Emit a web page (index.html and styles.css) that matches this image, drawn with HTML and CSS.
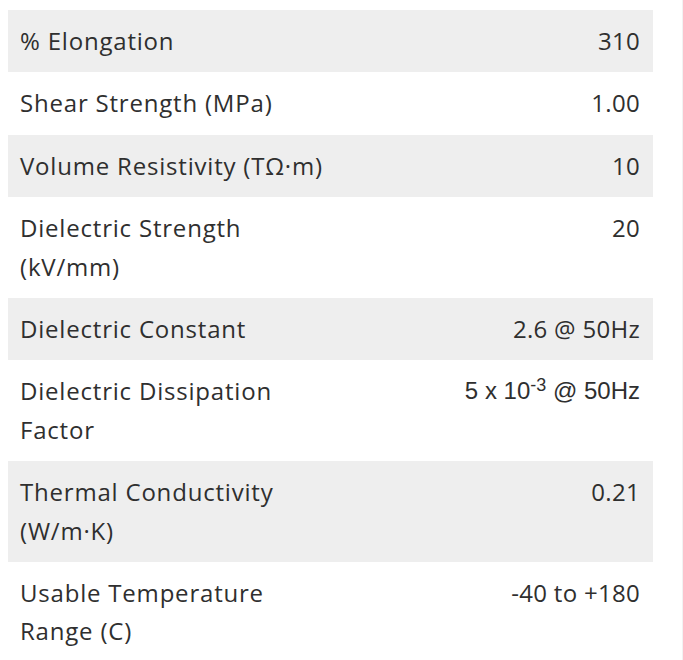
FILE: index.html
```
<!DOCTYPE html>
<html lang="en">
<head>
<meta charset="utf-8">
<title>Properties</title>
<link rel="stylesheet" href="styles.css">
</head>
<body>
<div class="page">
  <table class="props">
    <colgroup>
      <col class="col-label">
      <col class="col-value">
    </colgroup>
    <tbody>
      <tr class="odd"><td class="label">% Elongation</td><td class="value">310</td></tr>
      <tr><td class="label">Shear Strength (MPa)</td><td class="value">1.00</td></tr>
      <tr class="odd"><td class="label">Volume Resistivity (TΩ·m)</td><td class="value">10</td></tr>
      <tr><td class="label">Dielectric Strength (kV/mm)</td><td class="value">20</td></tr>
      <tr class="odd"><td class="label">Dielectric Constant</td><td class="value">2.6 @ 50Hz</td></tr>
      <tr><td class="label">Dielectric Dissipation Factor</td><td class="value alt">5 x 10<sup>-3</sup> @ 50Hz</td></tr>
      <tr class="odd"><td class="label">Thermal Conductivity (W/m·K)</td><td class="value">0.21</td></tr>
      <tr><td class="label">Usable Temperature Range (C)</td><td class="value">-40 to +180</td></tr>
    </tbody>
  </table>
</div>
</body>
</html>
```
FILE: styles.css
```
html, body {
  margin: 0;
  padding: 0;
  background: #fff;
}
.page {
  box-sizing: border-box;
  min-height: 100vh;
  padding: 10px 0 0 8px;
  border-right: 1px solid #f2f2f2;
}
.props {
  width: 645px;
  border-collapse: collapse;
  table-layout: fixed;
  font-family: "Open Sans", sans-serif;
  font-size: 24px;
  line-height: 1.6;
  color: #2f2f2f;
}
.col-label { width: 336px; }
.props td {
  padding: 12px 13px 12px 12px;
  vertical-align: top;
}
.props tr.odd td { background: #eee; }
.label { letter-spacing: 0.8px; }
.value {
  text-align: right;
  letter-spacing: 0.3px;
}
.value.alt {
  font-family: "Liberation Sans", Arial, sans-serif;
  letter-spacing: 0;
}
.value.alt sup {
  font-size: 0.75em;
  line-height: 0;
  vertical-align: 0.45em;
}
```
